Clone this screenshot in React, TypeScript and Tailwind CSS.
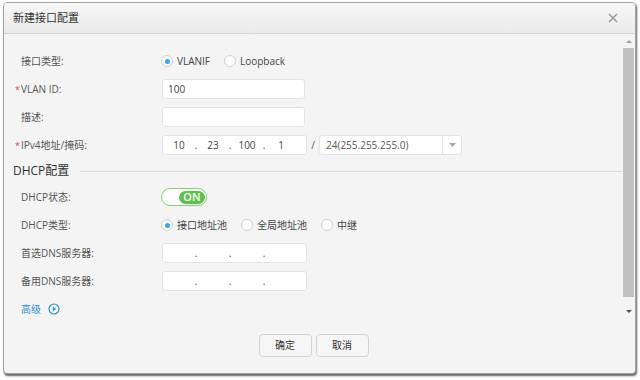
import React from 'react';

const Radio = ({ checked, label }: { checked?: boolean; label: string }) => (
  <label className="flex items-center mr-[14px]">
    <span className="w-[12px] h-[12px] rounded-full border border-[#cfcfcf] bg-white flex items-center justify-center">
      {checked && <span className="w-[5px] h-[5px] rounded-full bg-[#37a6ef]"></span>}
    </span>
    <span className="ml-[4px] text-[#444]">{label}</span>
  </label>
);

const Row = ({ label, required, children }: { label: string; required?: boolean; children?: React.ReactNode }) => (
  <div className="h-[28px] flex items-center">
    <div className="w-[158px] shrink-0 pl-[17px] text-[#555]">
      {required && <span className="inline-block w-[6px] -ml-[6px] text-[9px] text-[#e4393c]">*</span>}
      {label}
    </div>
    {children}
  </div>
);

// four octet fields split by dots
const IpBox = ({ parts }: { parts: string[] }) => (
  <div className="w-[145px] h-[20px] rounded-[3px] border border-[#e3e3e3] bg-white flex items-center pl-[3px] text-[#444]">
    {parts.map((p, i) => (
      <React.Fragment key={i}>
        <span className="w-[26px] text-center">{p}</span>
        {i < 3 && <span className="w-[8px] text-center">.</span>}
      </React.Fragment>
    ))}
  </div>
);

export default function App() {
  return (
    <div className="w-[640px] h-[380px] bg-white pt-[2px] pl-[3px] font-['Open_Sans','Noto_Sans_CJK_SC',sans-serif] text-[10px] text-[#4d4d4d]">
      <div className="w-[633px] h-[372px] flex flex-col rounded-[4px] border border-[#a3a3a3] bg-[#f4f4f4] overflow-hidden shadow-[1px_2px_2px_rgba(0,0,0,0.6)]">
        {/* header */}
        <div className="h-[31px] shrink-0 flex items-center justify-between pl-[9px] pr-[17px] border-b border-[#d4d4d4] bg-gradient-to-b from-[#f7f7f7] to-[#eaeaea]">
          <span className="text-[11px] text-[#333]">新建接口配置</span>
          <svg width="10" height="10" viewBox="0 0 10 10">
            <path d="M1 1L9 9M9 1L1 9" stroke="#9a9a9a" strokeWidth="1.5" />
          </svg>
        </div>

        {/* scroll area */}
        <div className="h-[284px] shrink-0 flex">
          <div className="flex-1 overflow-hidden pt-[13px]">
            <Row label="接口类型:">
              <div className="flex items-center -ml-[1px]">
                <Radio checked label="VLANIF" />
                <Radio label="Loopback" />
              </div>
            </Row>
            <Row label="VLAN ID:" required>
              <div className="w-[143px] h-[20px] rounded-[3px] border border-[#e3e3e3] bg-white flex items-center pl-[5px] text-[#444]">100</div>
            </Row>
            <Row label="描述:">
              <div className="w-[143px] h-[20px] rounded-[3px] border border-[#e3e3e3] bg-white"></div>
            </Row>
            <Row label="IPv4地址/掩码:" required>
              <IpBox parts={['10', '23', '100', '1']} />
              <span className="w-[12px] text-center text-[#555]">/</span>
              <div className="w-[143px] h-[20px] rounded-[3px] border border-[#e3e3e3] bg-white flex items-center text-[#555]">
                <span className="flex-1 pl-[6px]">24(255.255.255.0)</span>
                <span className="w-[19px] h-full border-l border-[#e3e3e3] flex items-center justify-center">
                  <svg width="7" height="4" viewBox="0 0 7 4"><path d="M0 0H7L3.5 4Z" fill="#a8a8a8" /></svg>
                </span>
              </div>
            </Row>

            <div className="h-[24px] flex items-center pl-[9px]">
              <span className="text-[12px] text-[#333]">DHCP配置</span>
              <span className="flex-1 h-px bg-[#dcdcdc] ml-[11px] mr-[1px]"></span>
            </div>

            <Row label="DHCP状态:">
              <div className="w-[46px] h-[18px] -ml-[1px] rounded-full border-[1.5px] border-[#7fd172] bg-white flex items-center justify-end pr-[1px]">
                <span className="w-[26px] h-[13px] rounded-full bg-[#5ec04d] text-white text-[11px] font-semibold flex items-center justify-center">ON</span>
              </div>
            </Row>
            <Row label="DHCP类型:">
              <div className="flex items-center -ml-[1px]">
                <Radio checked label="接口地址池" />
                <Radio label="全局地址池" />
                <Radio label="中继" />
              </div>
            </Row>
            <Row label="首选DNS服务器:">
              <IpBox parts={['', '', '', '']} />
            </Row>
            <Row label="备用DNS服务器:">
              <IpBox parts={['', '', '', '']} />
            </Row>
            <div className="h-[28px] flex items-center pl-[17px] text-[#2f90d2]">
              <span>高级</span>
              <svg className="ml-[7px]" width="12" height="12" viewBox="0 0 12 12">
                <circle cx="6" cy="6" r="5" fill="none" stroke="#2f90d2" strokeWidth="1.2" />
                <path d="M4.8 3.6L8.2 6L4.8 8.4Z" fill="#2f90d2" />
              </svg>
            </div>
          </div>

          {/* scrollbar */}
          <div className="w-[11px] mr-[1px] flex flex-col">
            <div className="h-[14px] flex items-center justify-center">
              <svg width="6" height="3" viewBox="0 0 6 3"><path d="M0 3H6L3 0Z" fill="#a0a0a0" /></svg>
            </div>
            <div className="h-[249px] bg-[#c1c1c1]"></div>
            <div className="h-[8px]"></div>
            <div className="h-[13px] flex items-center justify-center">
              <svg width="6" height="3" viewBox="0 0 6 3"><path d="M0 0H6L3 3Z" fill="#505050" /></svg>
            </div>
          </div>
        </div>

        {/* footer */}
        <div className="flex-1 flex items-center justify-center gap-[4px] pr-[12px]">
          <button className="w-[53px] h-[23px] rounded-[4px] border border-[#d2d2d2] bg-[#f6f6f6] text-[#333]">确定</button>
          <button className="w-[53px] h-[23px] rounded-[4px] border border-[#d2d2d2] bg-[#f6f6f6] text-[#333]">取消</button>
        </div>
      </div>
    </div>
  );
}
